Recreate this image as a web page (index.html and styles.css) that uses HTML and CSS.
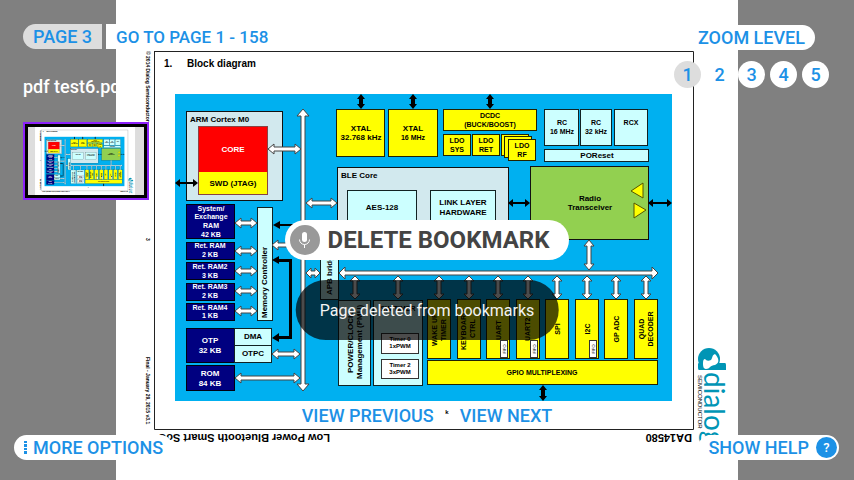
FILE: index.html
```html
<!DOCTYPE html>
<html lang="en">
<head>
<meta charset="utf-8">
<title>pdf test6.pdf</title>
<link rel="stylesheet" href="styles.css">
</head>
<body>
<main class="viewer">
  <svg class="document" viewBox="116 0 622 480" role="img" aria-label="Block diagram page">
    <g id="page">
      <rect class="paper" x="116" y="-20" width="622" height="520"/>
      <path class="frame" d="M154.500 51V429.500H693.500V51.500H154"/>
      <text class="t10" x="164" y="67">1.</text>
      <text class="t10" x="187" y="67">Block diagram</text>
      <text class="margin-note" transform="translate(146 51) rotate(90)">© 2014 Dialog Semiconductor</text>
      <text class="margin-note" transform="translate(146 238) rotate(90)">3</text>
      <text class="margin-note" transform="translate(146 357) rotate(90)">Final - January 29, 2015 v3.1</text>
      <text class="t11" transform="translate(330 434) rotate(180)">Low Power Bluetooth Smart SoC</text>
      <text class="t11" transform="translate(692 434) rotate(180)">DA14580</text>
      <text class="t6" x="447" y="414">k</text>

      <rect class="board" x="175" y="94" width="497" height="307"/>

      <!-- Processor core -->
      <rect class="pale" x="186.500" y="111.500" width="96" height="89"/>
      <text class="t8 start" x="190" y="122">ARM Cortex M0</text>
      <rect class="red" x="198" y="126" width="70" height="46"/>
      <rect class="gold" x="198" y="172" width="70" height="22"/>
      <rect class="outline" x="198.500" y="126.500" width="69" height="68"/>
      <text class="t8 light" x="233" y="152">CORE</text>
      <text class="t8" x="233" y="186">SWD (JTAG)</text>

      <!-- Clocks and power -->
      <g class="yellow">
        <rect x="336.500" y="109.500" width="48" height="47"/>
        <rect x="388.500" y="109.500" width="49" height="47"/>
        <rect x="443.500" y="109.500" width="93" height="21"/>
        <rect x="443.500" y="134.500" width="27" height="21"/>
        <rect x="472.500" y="134.500" width="27" height="21"/>
        <rect x="501.500" y="134.500" width="27" height="21"/>
        <rect x="504.500" y="136.500" width="27" height="21"/>
        <rect x="508.500" y="139.500" width="27" height="21"/>
      </g>
      <text class="t8" x="361" y="131">XTAL<tspan x="361" y="140">32.768 kHz</tspan></text>
      <text class="t8" x="413" y="131">XTAL</text><text class="t7" x="413" y="140">16 MHz</text>
      <text class="t7" x="490" y="118">DCDC<tspan x="490" y="127">(BUCK/BOOST)</tspan></text>
      <text class="t7" x="457" y="143">LDO<tspan x="457" y="152">SYS</tspan></text>
      <text class="t7" x="486" y="143">LDO<tspan x="486" y="152">RET</tspan></text>
      <text class="t7" x="522" y="148">LDO<tspan x="522" y="157">RF</tspan></text>
      <g class="aqua">
        <rect x="544.500" y="109.500" width="34" height="36"/>
        <rect x="580.500" y="109.500" width="31" height="36"/>
        <rect x="614.500" y="109.500" width="33" height="36"/>
        <rect x="544.500" y="149.500" width="104" height="12"/>
      </g>
      <text class="t7" x="562" y="125">RC<tspan x="562" y="134">16 MHz</tspan></text>
      <text class="t7" x="596" y="125">RC<tspan x="596" y="134">32 kHz</tspan></text>
      <text class="t7" x="631" y="125">RCX</text>
      <text class="t8" x="597" y="158">POReset</text>

      <!-- Radio -->
      <rect class="pale" x="337.500" y="167.500" width="171" height="90"/>
      <text class="t8 start" x="341" y="178">BLE Core</text>
      <g class="aqua">
        <rect x="347.500" y="190.500" width="69" height="46"/>
        <rect x="430.500" y="190.500" width="65" height="46"/>
      </g>
      <text class="t8" x="382" y="210">AES-128</text>
      <text class="t8" x="463" y="205">LINK LAYER<tspan x="463" y="215">HARDWARE</tspan></text>
      <rect class="green" x="530.500" y="166.500" width="118" height="73"/>
      <text class="t8" x="590" y="201">Radio<tspan x="590" y="210">Transceiver</tspan></text>
      <path class="amp" d="M631 191L643 183V198zM634 203V218L646 210z"/>

      <!-- Memories -->
      <g class="navy">
        <rect x="186.500" y="204.500" width="48" height="34"/>
        <rect x="186.500" y="242.500" width="48" height="17"/>
        <rect x="186.500" y="262.500" width="48" height="17"/>
        <rect x="186.500" y="283.500" width="48" height="17"/>
        <rect x="186.500" y="303.500" width="48" height="17"/>
        <rect x="186.500" y="328.500" width="48" height="34"/>
        <rect x="186.500" y="365.500" width="48" height="25"/>
      </g>
      <g class="light">
        <text class="t7" x="211" y="211">System/<tspan x="211" y="219">Exchange</tspan><tspan x="211" y="228">RAM</tspan><tspan x="211" y="237">42 KB</tspan></text>
        <text class="t7" x="210" y="248">Ret. RAM<tspan x="210" y="257">2 KB</tspan></text>
        <text class="t7" x="210" y="269">Ret. RAM2<tspan x="210" y="278">3 KB</tspan></text>
        <text class="t7" x="210" y="289">Ret. RAM3<tspan x="210" y="298">2 KB</tspan></text>
        <text class="t7" x="210" y="310">Ret. RAM4<tspan x="210" y="318">1 KB</tspan></text>
        <text class="t8" x="210" y="343">OTP<tspan x="210" y="353">32 KB</tspan></text>
        <text class="t8" x="210" y="376">ROM<tspan x="210" y="386">84 KB</tspan></text>
      </g>
      <g class="aqua">
        <rect x="234.500" y="328.500" width="37" height="17"/>
        <rect x="234.500" y="345.500" width="37" height="17"/>
        <rect x="257.500" y="207.500" width="15" height="113"/>
        <rect x="320.500" y="230.500" width="18" height="69"/>
      </g>
      <text class="t8" x="253" y="339">DMA</text>
      <text class="t8" x="253" y="356">OTPC</text>
      <text class="t8 start" transform="translate(267 318) rotate(-90)">Memory Controller</text>
      <text class="t8 start" transform="translate(332 295) rotate(-90)">APB bridge</text>

      <!-- Peripherals -->
      <g class="aqua">
        <rect x="338.500" y="300.500" width="32" height="85"/>
        <rect x="373.500" y="300.500" width="49" height="85"/>
      </g>
      <text class="t8 start" transform="translate(353 373) rotate(-90)">POWER/CLOCK</text>
      <text class="t8 start" transform="translate(362 379) rotate(-90)">Management (PMU)</text>
      <text class="t7" x="398" y="311">SW TIMER</text>
      <g class="chip">
        <rect x="381.500" y="333.500" width="37" height="20"/>
        <rect x="381.500" y="359.500" width="37" height="19"/>
      </g>
      <text class="t6" x="400" y="341">Timer 0<tspan x="400" y="348">1xPWM</tspan></text>
      <text class="t6" x="400" y="367">Timer 2<tspan x="400" y="374">3xPWM</tspan></text>
      <g class="yellow">
        <rect x="427.500" y="299.500" width="23" height="59"/>
        <rect x="457.500" y="299.500" width="23" height="59"/>
        <rect x="486.500" y="299.500" width="23" height="59"/>
        <rect x="516.500" y="299.500" width="23" height="59"/>
        <rect x="545.500" y="299.500" width="23" height="59"/>
        <rect x="575.500" y="299.500" width="23" height="59"/>
        <rect x="604.500" y="299.500" width="23" height="59"/>
        <rect x="634.500" y="299.500" width="23" height="59"/>
        <rect x="427.500" y="360.500" width="230" height="24"/>
      </g>
      <text class="t7 start" transform="translate(437 346) rotate(-90)">WAKE UP</text>
      <text class="t7 start" transform="translate(446 341) rotate(-90)">TIMER</text>
      <text class="t7 start" transform="translate(466 350) rotate(-90)">KEYBOARD</text>
      <text class="t7 start" transform="translate(475 338) rotate(-90)">CTRL</text>
      <text class="t7 start" transform="translate(501 340) rotate(-90)">UART</text>
      <text class="t7 start" transform="translate(530 341) rotate(-90)">UART2</text>
      <text class="t7" transform="translate(560 329) rotate(-90)">SPI</text>
      <text class="t7" transform="translate(590 329) rotate(-90)">I2C</text>
      <text class="t7" transform="translate(619 329) rotate(-90)">GP ADC</text>
      <text class="t7" transform="translate(644 329) rotate(-90)">QUAD</text>
      <text class="t7" transform="translate(653 329) rotate(-90)">DECODER</text>
      <g class="chip">
        <rect x="500.500" y="340.500" width="7" height="17"/>
        <rect x="530.500" y="340.500" width="7" height="17"/>
        <rect x="589.500" y="340.500" width="7" height="17"/>
      </g>
      <text class="t4" transform="translate(506 349) rotate(-90)">FIFO</text>
      <text class="t4" transform="translate(536 349) rotate(-90)">FIFO</text>
      <text class="t4" transform="translate(595 349) rotate(-90)">FIFO</text>
      <text class="t7" x="542" y="375">GPIO MULTIPLEXING</text>

      <!-- Buses -->
      <g class="arrow">
        <path d="M303 109l6 7h-4V384h4l-6 7 -6-7h4V116h-4z"/>
        <path d="M339 273l6-6v4H652v-4l6 6 -6 6v-4H345v4z"/>
        <path d="M268 149l6-5v3H295v-3l6 5 -6 5v-3H274v3z"/>
        <path d="M306 203l6-5v3H331v-3l6 5 -6 5v-3H312v3z"/>
        <path d="M306 273l5-5v3H315v-3l5 5 -5 5v-3H311v3z"/>
        <path d="M235 223l6-5v3H251v-3l6 5 -6 5v-3H241v3z"/>
        <path d="M235 251l6-5v3H251v-3l6 5 -6 5v-3H241v3z"/>
        <path d="M235 271l6-5v3H251v-3l6 5 -6 5v-3H241v3z"/>
        <path d="M235 291l6-5v3H251v-3l6 5 -6 5v-3H241v3z"/>
        <path d="M235 311l6-5v3H251v-3l6 5 -6 5v-3H241v3z"/>
        <path d="M272 245l6-5v3H295v-3l6 5 -6 5v-3H278v3z"/>
        <path d="M272 354l6-5v3H294v-3l6 5 -6 5v-3H278v3z"/>
        <path d="M235 378l6-5v3H294v-3l6 5 -6 5v-3H241v3z"/>
        <path d="M589 240l5 6h-3V264h3l-5 6 -5-6h3V246h-3z"/>
        <path d="M355 276l5 5h-3V294h3l-5 5 -5-5h3V281h-3z"/>
        <path d="M398 276l5 5h-3V294h3l-5 5 -5-5h3V281h-3z"/>
        <path d="M439 276l5 5h-3V294h3l-5 5 -5-5h3V281h-3z"/>
        <path d="M469 276l5 5h-3V294h3l-5 5 -5-5h3V281h-3z"/>
        <path d="M498 276l5 5h-3V294h3l-5 5 -5-5h3V281h-3z"/>
        <path d="M528 276l5 5h-3V294h3l-5 5 -5-5h3V281h-3z"/>
        <path d="M557 276l5 5h-3V294h3l-5 5 -5-5h3V281h-3z"/>
        <path d="M587 276l5 5h-3V294h3l-5 5 -5-5h3V281h-3z"/>
        <path d="M616 276l5 5h-3V294h3l-5 5 -5-5h3V281h-3z"/>
        <path d="M646 276l5 5h-3V294h3l-5 5 -5-5h3V281h-3z"/>
      </g>
      <g class="signal">
        <path d="M175 183l5-4v3H193v-3l5 4 -5 4v-3H180v3z"/>
        <path d="M508 203l5-4v3H525v-3l5 4 -5 4v-3H513v3z"/>
        <path d="M648 203l5-4v3H667v-3l5 4 -5 4v-3H653v3z"/>
        <path d="M361 94l4 5h-2V104h2l-4 5 -4-5h2V99h-2z"/>
        <path d="M413 94l4 5h-2V104h2l-4 5 -4-5h2V99h-2z"/>
        <path d="M490 94l4 5h-2V104h2l-4 5 -4-5h2V99h-2z"/>
        <path d="M543 385l4 5h-2V396h2l-4 5 -4-5h2V390h-2z"/>
        <path d="M273 225l7-4v3H301v2H280v3z"/>
        <path d="M272 260l7-4v3H292V339H279v3l-7-4 7-5v3H289V262H279v2z"/>
      </g>

      <!-- Company logo -->
      <circle class="teal" cx="709" cy="359" r="11"/>
      <path class="teal" d="M699 363H725q1 0 1 2V370H699q-1 0-1-2v-4q0-1 1-1z"/>
      <path class="swoosh" d="M703 363q0-4 2-4 2 3 6 1c2-3 1-5 4-6 4 4 5 9 0 11 -5 0-5 4-9 4 -3 0-3-4-3-6z"/>
      <text class="brand" transform="translate(704 372) rotate(90)">dialog</text>
      <text class="brand-sub" transform="translate(698 375) rotate(90)">SEMICONDUCTOR</text>
    </g>
  </svg>

  <div class="controls">
    <header class="top-bar">
      <div class="file-panel">
        <div class="page-actions">
          <button class="pill current">PAGE 3</button>
          <button class="pill goto">GO TO PAGE 1 - 158</button>
        </div>
        <h1 class="file-name">pdf test6.pdf</h1>
        <button class="thumbnail" aria-label="Page overview">
          <svg viewBox="71 33 724 423" preserveAspectRatio="xMidYMid slice"><use href="#page"/></svg>
        </button>
      </div>
      <div class="zoom-panel">
        <button class="pill">ZOOM LEVEL</button>
        <div class="levels">
          <button class="level current">1</button>
          <button class="level">2</button>
          <button class="level">3</button>
          <button class="level">4</button>
          <button class="level">5</button>
        </div>
      </div>
    </header>

    <div class="command">
      <svg class="mic" viewBox="0 0 30 30" aria-hidden="true">
        <circle cx="15" cy="15" r="15"/>
        <rect x="12" y="7" width="5" height="10" rx="2.500"/>
        <path d="M9.500 14.500a5 5 0 0 0 10 0M14.500 19.500V23"/>
      </svg>
      <span>DELETE BOOKMARK</span>
    </div>

    <nav class="page-nav">
      <button class="pill">VIEW PREVIOUS</button>
      <button class="pill">VIEW NEXT</button>
    </nav>

    <footer class="bottom-bar">
      <button class="pill more">
        <svg class="dots" viewBox="0 0 3 13" aria-hidden="true"><path d="M0 0h3v2H0zM0 3h3v3H0zM0 7h3v2H0zM0 10h3v3H0z"/></svg>
        MORE OPTIONS
      </button>
      <button class="pill help">SHOW HELP <span class="question">?</span></button>
    </footer>
  </div>

  <div class="toast" role="status">Page deleted from bookmarks</div>
</main>
</body>
</html>
```

FILE: styles.css
```css
* { box-sizing: border-box; }

body {
  margin: 0;
  background: #808080;
  font-family: Roboto, "Liberation Sans", sans-serif;
}

button {
  margin: 0;
  padding: 0;
  border: 0;
  font: inherit;
  color: inherit;
  cursor: pointer;
}

.viewer {
  position: relative;
  display: grid;
  min-height: 100vh;
  overflow: hidden;
}

.document,
.controls { grid-area: 1 / 1; }

.document {
  justify-self: center;
  height: 100vh;
  max-width: 100%;
}

.controls {
  z-index: 1;
  display: grid;
}

.top-bar,
.command,
.page-nav,
.bottom-bar { grid-area: 1 / 1; }

/* Buttons */
.pill {
  display: flex;
  align-items: center;
  height: 25px;
  padding: 0 10px;
  border-radius: 13px;
  background: #fff;
  color: #1c91e6;
  font-size: 18px;
  font-weight: 500;
  white-space: nowrap;
}

.pill.current {
  border-radius: 13px 0 0 13px;
  background: #ddd;
}

.pill.goto {
  border-radius: 0 13px 13px 0;
  font-size: 17px;
}

/* Top */
.top-bar {
  display: flex;
  justify-content: space-between;
  align-items: flex-start;
  padding: 24px 25px 0 23px;
}

.page-actions {
  display: flex;
  gap: 4px;
}

.file-name {
  margin: 26px 0 0;
  color: #fff;
  font-size: 18px;
  font-weight: 500;
  line-height: 24px;
}

.thumbnail {
  display: block;
  width: 126px;
  height: 78px;
  margin-top: 23px;
  border: 2px solid #8c22fa;
  outline: 3px solid #000;
  outline-offset: -5px;
  padding: 3px;
  background: #ddd;
}

.thumbnail svg {
  display: block;
  width: 100%;
  height: 100%;
}

.zoom-panel {
  display: flex;
  flex-direction: column;
  align-items: center;
  gap: 11px;
  padding-top: 1px;
}

.levels {
  display: flex;
  gap: 5px;
}

.level {
  width: 27px;
  height: 27px;
  border-radius: 50%;
  background: #fff;
  color: #1c91e6;
  font-size: 18px;
  font-weight: 500;
}

.level.current { background: #ddd; }

/* Centre */
.command {
  place-self: center;
  display: flex;
  align-items: center;
  gap: 8px;
  height: 40px;
  padding: 0 20px 0 5px;
  border-radius: 20px;
  background: #fff;
  color: #444;
  font-size: 24px;
  font-weight: 700;
}

.mic {
  width: 30px;
  height: 30px;
  fill: #fff;
}

.mic circle { fill: #999; }

.mic path {
  fill: none;
  stroke: #fff;
  stroke-width: 1;
}

.toast {
  position: absolute;
  z-index: 2;
  bottom: 140px;
  left: 50%;
  transform: translateX(-50%);
  padding: 19px 24px 17px;
  border-radius: 30px;
  background: rgba(0, 0, 0, 0.7);
  color: #f4f4f4;
  font-size: 16px;
  line-height: 24px;
  white-space: nowrap;
}

.page-nav {
  place-self: end center;
  display: flex;
  gap: 6px;
  margin-bottom: 52px;
}

/* Bottom */
.bottom-bar {
  align-self: end;
  display: flex;
  justify-content: space-between;
  padding: 0 15px 20px 14px;
}

.more { gap: 6px; }

.dots {
  width: 3px;
  height: 13px;
  fill: #1c91e6;
}

.help {
  gap: 7px;
  padding-right: 2px;
}

.question {
  width: 21px;
  height: 21px;
  border-radius: 50%;
  background: #1c91e6;
  color: #fff;
  font-size: 13px;
  line-height: 21px;
  text-align: center;
}

/* Document page */
#page {
  font-family: "Liberation Sans", Arial, sans-serif;
  font-weight: 700;
  text-anchor: middle;
}

.paper { fill: #fff; }
.frame { fill: none; stroke: #222; }
.board { fill: #00b0f0; }
.pale { fill: #d2e9ee; stroke: #111; }
.red { fill: #f00; }
.gold { fill: #ff0; }
.outline { fill: none; stroke: #844; }
.yellow { fill: #ff0; stroke: #222200; }
.aqua { fill: #cff; stroke: #122; }
.green { fill: #92d050; stroke: #111; }
.navy { fill: #000080; stroke: #001; }
.chip { fill: #fff; stroke: #333; }
.amp { fill: #ff0; stroke: #550; }
.arrow { fill: #fff; stroke: #444; stroke-width: 1; }
.signal { fill: #000; }
.light { fill: #fff; }
.teal { fill: #0095b5; }
.swoosh { fill: #fff; }

.t4 { font-size: 4px; font-weight: 400; }
.t6 { font-size: 6px; }
.t7 { font-size: 7px; }
.t8 { font-size: 8px; }
.t10 { font-size: 10px; text-anchor: start; }
.t11 { font-size: 11px; text-anchor: start; }
.start { text-anchor: start; }

.margin-note {
  font-size: 5px;
  text-anchor: start;
}

.brand {
  fill: #0095b5;
  font-family: Lato, sans-serif;
  font-size: 28px;
  font-weight: 400;
  text-anchor: start;
}

.brand-sub {
  font-size: 6px;
  font-weight: 400;
  text-anchor: start;
}
```
